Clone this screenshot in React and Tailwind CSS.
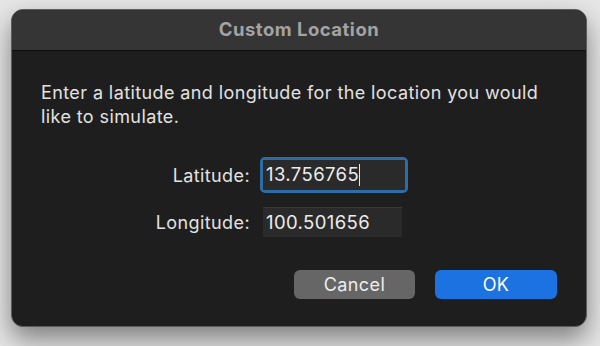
import React from 'react';

export default function App() {
    const font = { fontFamily: 'Inter, "Noto Sans", "Liberation Sans", sans-serif' };

    return (
        <div className="w-[600px] h-[346px] bg-[#e6e6e6] pt-[9px] pl-[11px] overflow-hidden" style={font}>
            <div className="w-[576px] h-[318px] rounded-[12px] bg-[#1e1e1e] border border-[#5c5c5c] shadow-[0_12px_26px_rgba(0,0,0,0.45)] overflow-hidden flex flex-col">
                {/* Title bar */}
                <div className="h-[41px] shrink-0 bg-[#353535] border-b border-[#0e0e0e] flex items-center justify-center">
                    <span className="text-[18.5px] font-bold text-[#a3a3a3] tracking-[0.5px]">Custom Location</span>
                </div>

                <div className="flex-1 flex flex-col px-[29px] pt-[30px] tracking-[0.4px]">
                    <p className="w-[505px] text-[18px] leading-[24px] text-[#e2e2e2]">
                        Enter a latitude and longitude for the location you would like to simulate.
                    </p>

                    <div className="mt-[28px] flex flex-col gap-[14px]">
                        <div className="flex items-center">
                            <label className="w-[222px] pr-[13px] text-right text-[18px] text-[#e2e2e2]">Latitude:</label>
                            <div className="rounded-[5px] border-[3px] border-[#2b6da4] -ml-[3px]">
                                <div className="w-[142px] h-[30px] bg-[#2a2a2a] flex items-center px-[3px] text-[18.5px] text-[#ececec]">
                                    13.756765<span className="w-px h-[22px] bg-[#e6e6e6]"></span>
                                </div>
                            </div>
                        </div>
                        <div className="flex items-center">
                            <label className="w-[222px] pr-[13px] text-right text-[18px] text-[#e2e2e2]">Longitude:</label>
                            <div className="w-[139px] h-[30px] bg-[#2a2a2a] border-t border-[#3a3a3a] flex items-center px-[3px] text-[18.5px] text-[#ececec]">
                                100.501656
                            </div>
                        </div>
                    </div>

                    <div className="mt-auto mb-[27px] flex justify-end gap-[20px]">
                        <button className="w-[121px] h-[29px] rounded-[6px] bg-[#666666] text-[18px] text-[#ededed] tracking-[0.4px] flex items-center justify-center">
                            Cancel
                        </button>
                        <button className="w-[122px] h-[29px] rounded-[6px] bg-[#1b72e0] text-[18px] text-white tracking-[0.4px] flex items-center justify-center">
                            OK
                        </button>
                    </div>
                </div>
            </div>
        </div>
    );
}
